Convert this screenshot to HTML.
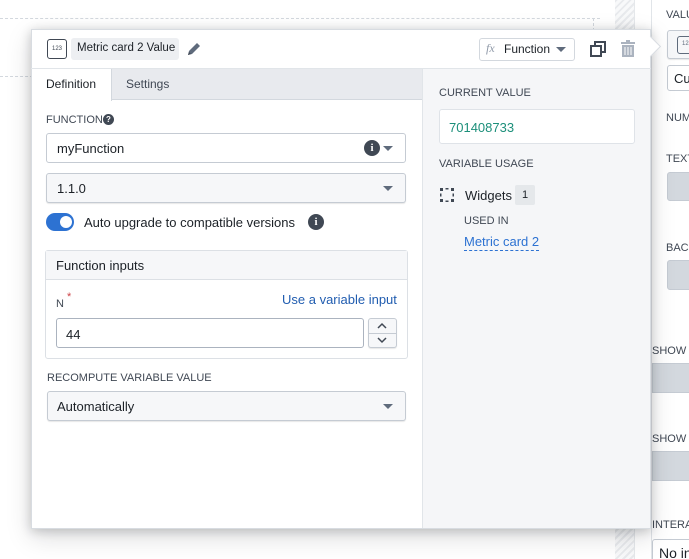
<!DOCTYPE html>
<html><head><meta charset="utf-8"><style>
*{box-sizing:border-box;margin:0;padding:0}
body{width:689px;height:559px;overflow:hidden;background:#fff;font-family:"Liberation Sans",sans-serif;color:#1c2127;position:relative;font-size:13px;white-space:nowrap}
.a{position:absolute}
.lbl{font-size:11px;color:#404854;letter-spacing:0}
.sel{position:absolute;border:1px solid #c5cbd3;border-radius:3px;background:#f6f7f9;box-shadow:0 1px 1px rgba(17,20,24,.1)}
.inp{position:absolute;border:1px solid #c5cbd3;border-radius:3px;background:#fff}
.car{position:absolute;width:0;height:0;border-left:5px solid transparent;border-right:5px solid transparent;border-top:5px solid #5f6b7c}
.clip{position:absolute;left:651px;top:0;width:38px;height:559px;overflow:hidden}
</style></head><body>
<div class="a" style="left:0;top:18px;width:600px;border-top:1px dashed #d3d8de"></div>
<div class="a" style="left:0;top:76px;width:594px;border-top:1px dashed #d3d8de"></div>
<div class="a" style="left:593px;top:18px;height:58px;border-left:1px dashed #d3d8de"></div>
<div class="a" style="left:615px;top:0;width:19px;height:559px;background:repeating-linear-gradient(135deg,#e8eaed 0 2px,#f8f9fa 2px 5px)"></div>
<div class="a" style="left:634px;top:0;width:17px;height:559px;background:#fff;border-left:1px solid #e5e8eb"></div>
<div class="clip" style="background:#fff;border-left:1px solid #e1e5e9">
<div class="a lbl" style="left:14px;top:9px">VALUE</div>
<div class="sel" style="left:15px;top:30px;width:40px;height:29px"></div>
<div class="a" style="left:25px;top:36px;width:18px;height:18px;border:1px solid #5f6b7c;border-radius:3px;font-size:6px;padding:4px 0 0 4px;color:#5f6b7c">123</div>
<div class="inp" style="left:15px;top:65px;width:40px;height:26px;padding:5px 0 0 6px;font-size:13px">Current</div>
<div class="a lbl" style="left:14px;top:112px">NUMBER</div>
<div class="a lbl" style="left:14px;top:153px">TEXT</div>
<div class="a" style="left:15px;top:172px;width:40px;height:29px;background:#d3d8de;border:1px solid #c5cbd3;border-radius:3px"></div>
<div class="a lbl" style="left:14px;top:242px">BACKGROUND</div>
<div class="a" style="left:15px;top:260px;width:40px;height:30px;background:#d3d8de;border:1px solid #c5cbd3;border-radius:3px"></div>
<div class="a lbl" style="left:0;top:345px">SHOW SPARK</div>
<div class="a" style="left:0;top:363px;width:40px;height:30px;background:#d3d8de;border:1px solid #c5cbd3"></div>
<div class="a lbl" style="left:0;top:433px">SHOW VALUE</div>
<div class="a" style="left:0;top:451px;width:40px;height:30px;background:#d3d8de;border:1px solid #c5cbd3"></div>
<div class="a lbl" style="left:0;top:519px">INTERACTION</div>
<div class="inp" style="left:0;top:539px;width:40px;height:26px;padding:5px 0 0 6px;font-size:14px">No interaction</div>
</div>
<div class="a" style="left:31px;top:29px;width:620px;height:500px;background:#fff;border:1px solid #d8dce1;box-shadow:0 2px 10px rgba(17,20,24,.2),0 8px 24px rgba(17,20,24,.15)"></div>
<div class="a" style="left:643px;top:39px;width:15px;height:15px;background:#fff;transform:rotate(45deg);border-top:1px solid #d8dce1;border-right:1px solid #d8dce1"></div>
<div class="a" style="left:47px;top:39px;width:20px;height:20px;border:1px solid #404854;border-radius:3px;font-size:6px;color:#404854;text-align:center;line-height:18px">123</div>
<div class="a" style="left:71px;top:38px;width:108px;height:22px;background:#edeff2;border-radius:3px;font-size:11.5px;padding:4px 0 0 6px">Metric card 2 Value</div>
<svg class="a" style="left:186px;top:41px" width="16" height="16" viewBox="0 0 16 16"><path d="M2 14l1-4 8-8 3 3-8 8z" fill="#5f6b7c"/><path d="M2 14l1-3 2 2z" fill="#404854"/></svg>
<div class="a" style="left:479px;top:38px;width:96px;height:23px;border:1px solid #d3d8de;border-radius:3px;background:#fff"></div>
<div class="a" style="left:486px;top:41px;font-family:'Liberation Serif',serif;font-style:italic;color:#8f99a8;font-size:12px">fx</div>
<div class="a" style="left:504px;top:42px;font-size:12px">Function</div>
<div class="car" style="left:556px;top:47px"></div>
<svg class="a" style="left:589px;top:40px" width="18" height="18" viewBox="0 0 18 18"><rect x="2" y="6" width="10" height="10" fill="none" stroke="#404854" stroke-width="2"/><path d="M6 5V2h10v10h-3" fill="none" stroke="#404854" stroke-width="2"/></svg>
<svg class="a" style="left:620px;top:40px" width="16" height="18" viewBox="0 0 16 18"><rect x="1" y="2" width="14" height="2" fill="#abb3bf"/><rect x="6" y="0" width="4" height="2" fill="#abb3bf"/><path d="M2 5h12v12H2z" fill="#abb3bf"/><path d="M5 7v8M8 7v8M11 7v8" stroke="#fff" stroke-width="1"/></svg>
<div class="a" style="left:31px;top:68px;width:620px;border-top:1px solid #e1e5e9"></div>
<div class="a" style="left:111px;top:69px;width:311px;height:31px;background:#e8eaee;border-bottom:1px solid #d3d8de"></div>
<div class="a" style="left:111px;top:69px;height:32px;border-left:1px solid #d3d8de"></div>
<div class="a" style="left:46px;top:77px;font-size:12px">Definition</div>
<div class="a" style="left:126px;top:77px;font-size:12px;color:#404854">Settings</div>
<div class="a" style="left:422px;top:69px;width:228px;height:459px;background:#f5f6f8;border-left:1px solid #e1e5e9"></div>
<div class="a lbl" style="left:439px;top:87px">CURRENT VALUE</div>
<div class="inp" style="left:439px;top:109px;width:196px;height:35px;border-color:#dfe3e8;padding:10px 0 0 9px;color:#1c8f7a;font-size:13px">701408733</div>
<div class="a lbl" style="left:439px;top:158px">VARIABLE USAGE</div>
<svg class="a" style="left:439px;top:187px" width="16" height="16" viewBox="0 0 16 16" fill="#404854"><rect x="1" y="1" width="3" height="3"/><rect x="12" y="1" width="3" height="3"/><rect x="1" y="12" width="3" height="3"/><rect x="12" y="12" width="3" height="3"/><rect x="6.5" y="1" width="3" height="1.5"/><rect x="6.5" y="13.5" width="3" height="1.5"/><rect x="1" y="6.5" width="1.5" height="3"/><rect x="13.5" y="6.5" width="1.5" height="3"/></svg>
<div class="a" style="left:465px;top:188px;font-size:13px">Widgets</div>
<div class="a" style="left:515px;top:185px;width:20px;height:20px;background:#e5e8eb;border-radius:2px;font-size:11px;text-align:center;line-height:20px">1</div>
<div class="a lbl" style="left:464px;top:215px">USED IN</div>
<div class="a" style="left:464px;top:234px;font-size:13px;color:#2d72d2;border-bottom:1px dashed #2d72d2;padding-bottom:1px">Metric card 2</div>
<div class="a lbl" style="left:46px;top:114px">FUNCTION</div>
<div class="a" style="left:103px;top:114px;width:11px;height:11px;border-radius:50%;background:#404854;color:#fff;font-size:8px;font-weight:bold;text-align:center;line-height:11px">?</div>
<div class="inp" style="left:46px;top:133px;width:360px;height:30px;padding:7px 0 0 10px;font-size:13px">myFunction</div>
<div class="a" style="left:364px;top:140px;width:16px;height:16px;border-radius:50%;background:#404854;color:#fff;font-size:11px;font-weight:bold;text-align:center;line-height:16px;font-family:'Liberation Serif',serif">i</div>
<div class="car" style="left:383px;top:146px"></div>
<div class="sel" style="left:46px;top:173px;width:360px;height:30px;padding:7px 0 0 10px;font-size:13px">1.1.0</div>
<div class="car" style="left:383px;top:186px"></div>
<div class="a" style="left:46px;top:213px;width:28px;height:18px;border-radius:9px;background:#2d72d2"></div>
<div class="a" style="left:60px;top:216px;width:12px;height:12px;border-radius:50%;background:#fff"></div>
<div class="a" style="left:84px;top:215px;font-size:13px">Auto upgrade to compatible versions</div>
<div class="a" style="left:308px;top:214px;width:16px;height:16px;border-radius:50%;background:#404854;color:#fff;font-size:11px;font-weight:bold;text-align:center;line-height:16px;font-family:'Liberation Serif',serif">i</div>
<div class="a" style="left:45px;top:250px;width:363px;height:109px;border:1px solid #dce0e5;border-radius:3px;background:#fff"></div>
<div class="a" style="left:46px;top:251px;width:361px;height:29px;background:#f6f7f9;border-bottom:1px solid #dce0e5"></div>
<div class="a" style="left:56px;top:258px;font-size:13px">Function inputs</div>
<div class="a" style="left:56px;top:298px;font-size:11px;color:#404854">N</div>
<div class="a" style="left:67px;top:291px;font-size:11px;color:#cd4246">*</div>
<div class="a" style="left:282px;top:292px;font-size:13px;color:#215db0">Use a variable input</div>
<div class="inp" style="left:56px;top:318px;width:308px;height:30px;padding:8px 0 0 9px;font-size:13px;border-color:#abb3bf">44</div>
<div class="sel" style="left:368px;top:318px;width:29px;height:30px"></div>
<div class="a" style="left:369px;top:333px;width:27px;border-top:1px solid #c5cbd3"></div>
<svg class="a" style="left:376px;top:322px" width="12" height="8" viewBox="0 0 12 8"><path d="M2 6l4-4 4 4" fill="none" stroke="#404854" stroke-width="1.5"/></svg>
<svg class="a" style="left:376px;top:336px" width="12" height="8" viewBox="0 0 12 8"><path d="M2 2l4 4 4-4" fill="none" stroke="#404854" stroke-width="1.5"/></svg>
<div class="a lbl" style="left:47px;top:372px">RECOMPUTE VARIABLE VALUE</div>
<div class="sel" style="left:47px;top:391px;width:359px;height:30px;padding:7px 0 0 9px;font-size:13px">Automatically</div>
<div class="car" style="left:383px;top:404px"></div>
</body></html>
